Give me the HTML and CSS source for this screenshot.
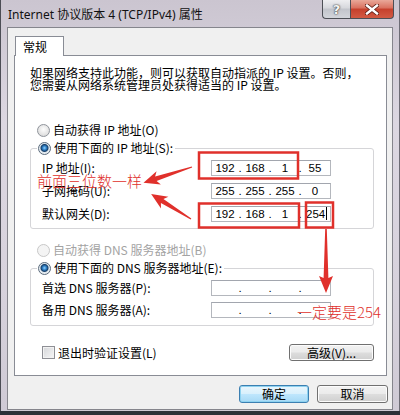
FILE: index.html
```html
<!DOCTYPE html>
<html lang="zh-CN">
<head>
    <meta charset="UTF-8">
    <meta name="viewport" content="width=device-width, initial-scale=1.0">
    <title>Internet 协议版本 4 (TCP/IPv4) 属性</title>
    <link rel="stylesheet" href="styles.css">
</head>
<body>
    <div class="window">
        <div class="titlebar">
            <span class="title">Internet 协议版本 4 (TCP/IPv4) 属性</span>
            <div class="caption">
                <div class="cap-btn help">?</div>
                <div class="cap-btn close">
                    <svg width="14" height="11" viewBox="0 0 14 11">
                        <path d="M2 1.5 L12 9.5 M12 1.5 L2 9.5" stroke="#5a1a12" stroke-width="4" stroke-linecap="square"/>
                        <path d="M2 1.5 L12 9.5 M12 1.5 L2 9.5" stroke="#fff" stroke-width="2.4" stroke-linecap="square"/>
                    </svg>
                </div>
            </div>
        </div>

        <div class="client">
            <div class="tab">常规</div>
            <div class="panel">
                <p class="intro">如果网络支持此功能，则可以获取自动指派的 IP 设置。否则，<br>您需要从网络系统管理员处获得适当的 IP 设置。</p>

                <div class="radio first"><span class="dot"></span>自动获得 IP 地址(O)</div>
                <div class="group">
                    <div class="radio legend checked"><span class="dot"></span>使用下面的 IP 地址(S):</div>
                    <div class="row">
                        <span class="label">IP 地址(I):</span>
                        <div class="ip"><span class="seg">192</span><span class="sep">.</span><span class="seg">168</span><span class="sep">.</span><span class="seg">1</span><span class="sep">.</span><span class="seg">55</span></div>
                    </div>
                    <div class="row">
                        <span class="label">子网掩码(U):</span>
                        <div class="ip"><span class="seg">255</span><span class="sep">.</span><span class="seg">255</span><span class="sep">.</span><span class="seg">255</span><span class="sep">.</span><span class="seg">0</span></div>
                    </div>
                    <div class="row">
                        <span class="label">默认网关(D):</span>
                        <div class="ip"><span class="seg">192</span><span class="sep">.</span><span class="seg">168</span><span class="sep">.</span><span class="seg">1</span><span class="sep">.</span><span class="seg edit">254<i class="caret"></i></span></div>
                    </div>
                </div>

                <div class="radio second disabled"><span class="dot"></span>自动获得 DNS 服务器地址(B)</div>
                <div class="group dns">
                    <div class="radio legend checked"><span class="dot"></span>使用下面的 DNS 服务器地址(E):</div>
                    <div class="row">
                        <span class="label">首选 DNS 服务器(P):</span>
                        <div class="ip"><span class="seg"></span><span class="sep">.</span><span class="seg"></span><span class="sep">.</span><span class="seg"></span><span class="sep">.</span><span class="seg"></span></div>
                    </div>
                    <div class="row">
                        <span class="label">备用 DNS 服务器(A):</span>
                        <div class="ip"><span class="seg"></span><span class="sep">.</span><span class="seg"></span><span class="sep">.</span><span class="seg"></span><span class="sep">.</span><span class="seg"></span></div>
                    </div>
                </div>

                <div class="footer-row">
                    <label class="check"><span class="box"></span>退出时验证设置(L)</label>
                    <button class="btn advanced">高级(V)...</button>
                </div>
            </div>

            <div class="dialog-buttons">
                <button class="btn default">确定</button>
                <button class="btn cancel">取消</button>
            </div>
        </div>
    </div>

    <!-- red annotations drawn over the dialog -->
    <svg class="marks" width="400" height="415" viewBox="0 0 400 415">
        <rect x="199" y="152.5" width="99" height="26" fill="none" stroke="#e0302b" stroke-width="2.5"/>
        <rect x="199" y="203.5" width="100" height="24" fill="none" stroke="#e0302b" stroke-width="2.5"/>
        <rect x="306" y="202.5" width="27" height="25" fill="none" stroke="#e0302b" stroke-width="2.5"/>
        <polygon transform="translate(192,167) rotate(162)" points="0,-0.6 38,-2.4 35,-7 51,0 35,7 38,2.4 0,0.6" fill="#e0302b"/>
        <polygon transform="translate(191,219) rotate(-148)" points="0,-0.6 34,-2.4 31,-7 47,0 31,7 34,2.4 0,0.6" fill="#e0302b"/>
        <polygon transform="translate(326,229) rotate(90)" points="0,-0.8 49,-2.4 47,-7 64,0 47,7 49,2.4 0,0.8" fill="#e0302b"/>
    </svg>
    <div class="note note-same">前面三位数一样</div>
    <div class="note note-254">一定要是254</div>
</body>
</html>
```

FILE: styles.css
```css
* {
    box-sizing: border-box;
}

body {
    margin: 0;
    position: relative;
    width: 400px;
    height: 415px;
    overflow: hidden;
    background-color: #2c3038;
    font-family: "Noto Sans CJK SC", sans-serif;
    font-size: 12px;
    color: #000;
}

.window {
    width: 400px;
    height: 411px;
    display: flex;
    flex-direction: column;
    padding: 0 6px 1px 6px;
    border-left: 1px solid #4c4d55;
    border-right: 1px solid #6d6c75;
    background: linear-gradient(#cbc5d0, #dcd7e1 30%, #d7d2dc 70%, #cfcad5);
}

.titlebar {
    height: 27px;
    display: flex;
    justify-content: space-between;
    align-items: flex-start;
    flex-shrink: 0;
}

.title {
    margin: 7px 0 0 1px;
    line-height: 16px;
    font-family: "Noto Sans", "Noto Sans CJK SC", sans-serif;
    font-size: 12px;
    color: #111;
}

.caption {
    display: flex;
    margin-right: -1px;
}

.cap-btn {
    height: 19px;
    display: flex;
    align-items: center;
    justify-content: center;
    border: 1px solid #4d4f56;
    border-top: none;
}

.help {
    width: 28px;
    border-right: none;
    border-radius: 0 0 0 4px;
    background: linear-gradient(#eeeef1, #d6d7dc 45%, #c2c4cb 50%, #d3d5db);
    color: #f6f6f6;
    font-family: "DejaVu Sans", sans-serif;
    font-size: 13px;
    font-weight: bold;
    text-shadow: 0 0 2px #333, 0 0 1px #333;
}

.close {
    width: 44px;
    border-radius: 0 0 4px 0;
    background: linear-gradient(#e9a899, #d9705e 45%, #c6402c 50%, #d25a43);
}

.client {
    flex: 1;
    display: flex;
    flex-direction: column;
    padding: 8px 5px 0 6px;
    border: 1px solid #85858c;
    background-color: #f0f0f0;
}

.tab {
    position: relative;
    z-index: 1;
    width: 49px;
    height: 20px;
    margin: 0 0 -1px 1px;
    padding: 1px 0 0 7px;
    line-height: 18px;
    background-color: #fff;
    border: 1px solid #898c95;
    border-bottom: none;
}

.panel {
    height: 321px;
    padding: 11px 12px 0 15px;
    background-color: #fff;
    border: 1px solid #898c95;
}

.intro {
    margin: 0;
    line-height: 12px;
}

.radio {
    display: flex;
    align-items: center;
    gap: 3px;
    height: 16px;
    line-height: 16px;
    padding-left: 7px;
}

.radio.first {
    margin-top: 31px;
}

.radio.second {
    margin-top: 13px;
}

.radio.disabled {
    color: #a3a3a3;
}

.dot {
    width: 13px;
    height: 13px;
    border-radius: 50%;
    border: 1px solid #8f949b;
    background: radial-gradient(circle at 50% 40%, #fdfdfd, #e4e4e4 60%, #cfcfcf);
}

.checked .dot {
    border-color: #5a6b7d;
    background: radial-gradient(circle at 50% 45%, #8fd2ff 0, #2c7dc4 2px, #173d66 3.5px, #dde7ef 4.5px, #f0f0f0 6px);
}

.disabled .dot {
    border-color: #c8c8c8;
    background: #f4f4f4;
}

.group {
    margin-top: 10px;
    padding: 0 0 6px 11px;
    border: 1px solid #d5d5d8;
    border-radius: 3px;
}

.group .legend {
    width: fit-content;
    margin: -9px 0 0 -5px;
    padding: 0 2px 0 1px;
    background-color: #fff;
}

.row {
    display: flex;
    align-items: center;
    height: 16px;
    margin-top: 7px;
}

.group .legend + .row {
    margin-top: 4px;
}

.dns .row + .row {
    margin-top: 6px;
}

.dns {
    padding-bottom: 7px;
}

.label {
    width: 169px;
    line-height: 16px;
}

.ip {
    display: flex;
    width: 120px;
    height: 16px;
    border: 1px solid #b4b7bd;
    border-top-color: #a2a6ae;
    background-color: #fff;
    font-family: "Liberation Sans", sans-serif;
    font-size: 11.5px;
    line-height: 14px;
}

.seg {
    width: 26px;
    display: flex;
    justify-content: center;
}

.seg.edit {
    justify-content: flex-start;
    padding-left: 4px;
}

.caret {
    width: 1px;
    height: 13px;
    margin-left: 1px;
    background-color: #000;
}

.sep {
    width: 4px;
    text-align: center;
}

.footer-row {
    display: flex;
    justify-content: space-between;
    align-items: center;
    margin-top: 18px;
    padding-left: 12px;
}

.check {
    display: flex;
    align-items: center;
    gap: 3px;
}

.box {
    width: 13px;
    height: 13px;
    border: 1px solid #8e8f95;
    background: linear-gradient(135deg, #d5d6d9, #f6f6f7);
    box-shadow: inset 0 0 0 1px #f2f2f2;
}

.btn {
    height: 18px;
    padding: 0;
    font-family: "Noto Sans CJK SC", sans-serif;
    font-size: 12px;
    line-height: 16px;
    color: #000;
    border: 1px solid #707070;
    border-radius: 3px;
    background: linear-gradient(#f2f2f2, #ebebeb 48%, #dddddd 52%, #cfcfcf);
    box-shadow: inset 0 0 0 1px #fcfcfc;
}

.advanced {
    width: 85px;
    height: 17px;
}

.dialog-buttons {
    display: flex;
    justify-content: flex-end;
    gap: 8px;
    margin: 9px -1px 0 0;
}

.default {
    width: 70px;
    border-color: #3c7fb1;
    box-shadow: inset 0 0 0 1px #8ed2f0;
    background: linear-gradient(#eaf6fd, #d9f0fc 48%, #bee6fd 52%, #a7d9f5);
}

.cancel {
    width: 71px;
}

.marks {
    position: absolute;
    left: 0;
    top: 0;
    pointer-events: none;
}

.note {
    position: absolute;
    color: #e0302b;
    font-family: "Noto Sans CJK SC", sans-serif;
    font-weight: 300;
    font-size: 15px;
    line-height: 15px;
    white-space: nowrap;
}

.note-same {
    left: 37px;
    top: 173px;
}

.note-254 {
    left: 297px;
    top: 304px;
}
```
